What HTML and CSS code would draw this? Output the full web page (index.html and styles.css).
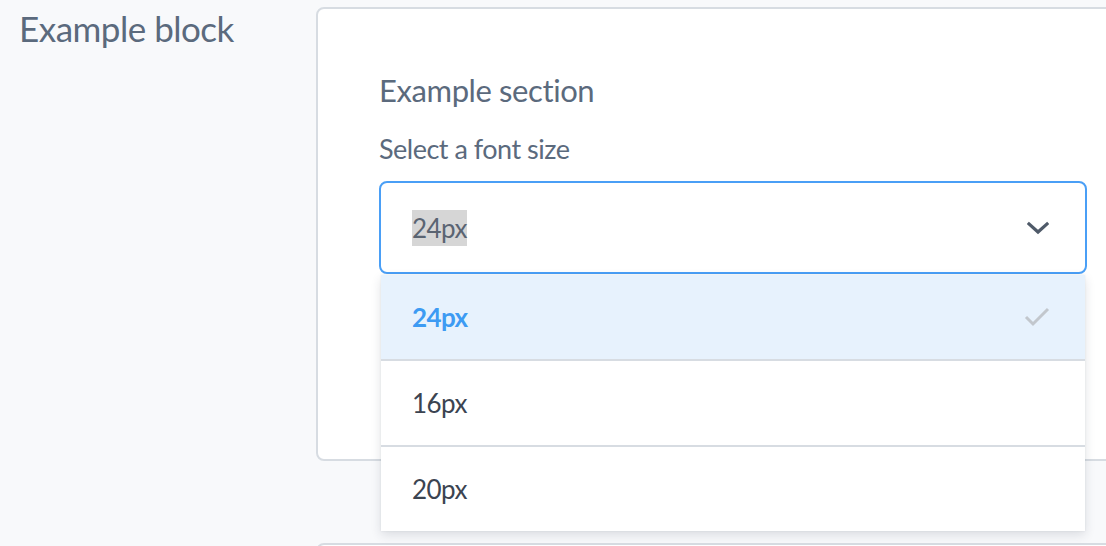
FILE: index.html
```html
<!DOCTYPE html>
<html lang="en">
<head>
<meta charset="UTF-8">
<title>Example block</title>
<link rel="stylesheet" href="styles.css">
</head>
<body>

<div class="page">

  <!-- first block: section with the font size select open -->
  <div class="block">
    <div class="block-label">Example block</div>
    <div class="card">
      <h3 class="section-title">Example section</h3>
      <label class="field-label">Select a font size</label>
      <div class="select">
        <div class="select-control">
          <span class="select-value">24px</span>
          <svg class="chevron" width="22" height="14" viewBox="0 0 22 14">
            <polyline points="2,3 11,11 20,3" fill="none" stroke="#4f5a69" stroke-width="3.2" stroke-linecap="square"/>
          </svg>
        </div>
        <ul class="select-menu">
          <li class="option selected">
            24px
            <svg class="check" width="28" height="22" viewBox="0 0 28 22">
              <polyline points="3,11 10,18 25,3" fill="none" stroke="#c2c7cd" stroke-width="3"/>
            </svg>
          </li>
          <li class="option">16px</li>
          <li class="option">20px</li>
        </ul>
      </div>
    </div>
  </div>

  <!-- next block, cut by the bottom of the window -->
  <div class="block next">
    <div class="block-label"></div>
    <div class="card"></div>
  </div>

</div>

</body>
</html>
```

FILE: styles.css
```css
body { margin: 0; background: #f8f9fb; font-family: Lato, "Liberation Sans", sans-serif; overflow: hidden; }
.page { padding-top: 7px; }
.block { display: flex; align-items: flex-start; }
.block.next { margin-top: 82px; }
.block-label {
  width: 316px;
  flex-shrink: 0;
  box-sizing: border-box;
  padding-left: 19px;
  font-size: 35px;
  line-height: 42px;
  letter-spacing: -0.5px;
  color: #5b6a7d;
}
.card {
  flex-shrink: 0;
  width: 900px;
  height: 454px;
  box-sizing: border-box;
  background: white;
  border: 2px solid #d7dce2;
  border-radius: 8px;
  padding: 62px 0 0 61px;
}
.section-title {
  margin: 0 0 23px;
  font-size: 31px;
  font-weight: normal;
  line-height: 38px;
  letter-spacing: -0.4px;
  color: #5b6a7d;
}
.field-label {
  display: block;
  font-size: 27px;
  line-height: 34px;
  letter-spacing: -0.5px;
  color: #5b6a7d;
}
.select {
  position: relative;
  width: 708px;
  margin-top: 15px;
}
.select-control {
  display: flex;
  align-items: center;
  justify-content: space-between;
  height: 93px;
  box-sizing: border-box;
  padding: 0 36px 0 31px;
  border: 2px solid #4a9ff6;
  border-radius: 8px;
  font-size: 26px;
  letter-spacing: -0.6px;
  color: #5a6472;
}
.select-value { background: #d6d6d6; line-height: 36px; }
.chevron { display: block; }
.select-menu {
  position: absolute;
  top: 100%;
  left: 2px;
  right: 2px;
  margin: 1px 0 0;
  padding: 0;
  list-style: none;
  background: white;
  box-shadow: 0 4px 10px rgba(40, 50, 70, 0.14), 0 0 2px rgba(40, 50, 70, 0.08);
}
.option {
  display: flex;
  align-items: center;
  justify-content: space-between;
  padding: 21px 34px 21px 31px;
  font-size: 26px;
  line-height: 42px;
  letter-spacing: -0.6px;
  color: #3b4451;
  border-bottom: 2px solid #d7dce2;
}
.option:last-child { border-bottom: none; }
.option.selected { background: #e7f2fd; color: #3d9bf3; font-weight: bold; }
.check { display: block; }
```
